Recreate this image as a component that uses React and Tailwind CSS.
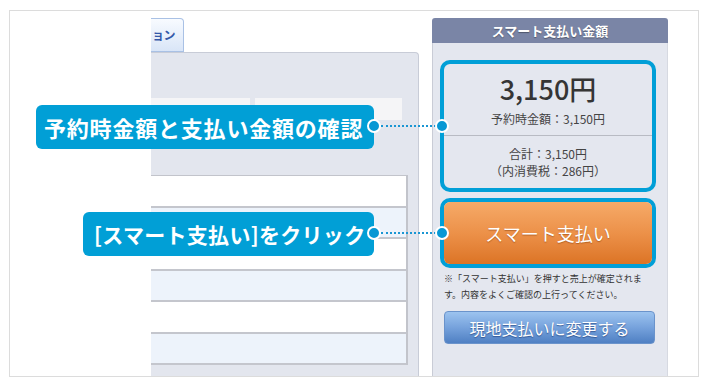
import React from "react";

const rows = [
  "bg-white",
  "bg-[#edf3fb]",
  "bg-white",
  "bg-[#edf3fb]",
  "bg-white",
  "bg-[#edf3fb]",
];

function Connector({ top }) {
  return (
    <>
      <div
        className="absolute left-[367px] w-[14px] h-[14px] rounded-full bg-[#0898d4] border-2 border-white z-20"
        style={{ top: top - 7 }}
      />
      <div
        className="absolute left-[381px] w-[55px] border-t-2 border-dotted border-[#1a96d3] z-10"
        style={{ top: top - 1 }}
      />
      <div
        className="absolute left-[435px] w-[14px] h-[14px] rounded-full bg-[#0898d4] border-2 border-white z-20"
        style={{ top: top - 7 }}
      />
    </>
  );
}

export default function App() {
  return (
    <div
      className="relative w-[710px] h-[387px] bg-white overflow-hidden"
      style={{ fontFamily: '"Noto Sans CJK JP", "Noto Sans", sans-serif' }}
    >
      <div className="pt-[10px] pl-[9px]">
        <div className="w-[690px] h-[367px] border border-[#dcdcdc] flex">
          {/* white area */}
          <div className="w-[141px] shrink-0" />

          {/* screenshot column */}
          <div className="w-[268px] shrink-0 flex flex-col">
            <div className="pt-[7px] h-[41px] flex">
              <div className="w-[33px] h-[34px] border border-l-0 border-[#a9c1e5] rounded-tr-[4px] bg-linear-to-b from-[#f8fbff] to-[#d9e5f7] flex items-center pl-[1px]">
                <span className="text-[12px] font-bold text-[#3458a9] leading-none tracking-[-0.5px]">
                  ョン
                </span>
              </div>
            </div>
            <div className="flex-1 bg-[#e3e6ee] border-t border-r border-[#c8ccd7] rounded-tr-[4px] pt-[45px]">
              <div className="flex gap-[5px] h-[22px]">
                <div className="w-[99px] bg-[#f5f5f7]" />
                <div className="w-[147px] bg-[#f5f5f7]" />
              </div>
              <div className="mt-[55px] w-[257px] border-t border-r-2 border-[#c2c4cb]">
                {rows.map((c, i) => (
                  <div
                    key={i}
                    className={`h-[31.5px] border-b-2 border-[#c4c6cd] ${c}`}
                  />
                ))}
              </div>
            </div>
          </div>

          {/* gap */}
          <div className="w-[13px] shrink-0" />

          {/* sidebar */}
          <div className="w-[236px] shrink-0 flex flex-col pt-[7px]">
            <div className="h-[25px] rounded-t-[3px] bg-[#7a85a6] flex items-center justify-center">
              <span className="text-[13px] font-bold text-white leading-none [text-shadow:0_1px_1px_rgba(0,0,0,0.35)]">
                スマート支払い金額
              </span>
            </div>
            <div className="flex-1 bg-[#e4e7ef] border-x border-l-[#c9ccd6] border-r-[#d6d9e1] pt-[17px] pl-[7px]">
              {/* amount box */}
              <div className="w-[216px] h-[132px] border-4 border-[#019fd7] rounded-[10px] flex flex-col text-[#444]">
                <div className="pt-[9px] text-center text-[27px] font-medium leading-[32px] text-[#353535]">
                  3,150円
                </div>
                <div className="mt-[6px] text-center text-[12px] leading-[16px]">
                  予約時金額：3,150円
                </div>
                <div className="mt-[8px] h-px bg-[#b8bbc3]" />
                <div className="mt-[10px] text-center text-[12px] leading-[16.5px]">
                  合計：3,150円
                  <br />
                  （内消費税：286円）
                </div>
              </div>

              {/* orange button box */}
              <div className="mt-[6px] w-[216px] h-[70px] border-4 border-[#019fd7] rounded-[10px] flex">
                <div className="flex-1 rounded-[6px] bg-linear-to-b from-[#f6aa68] via-[#ec9149] to-[#dc7424] flex items-center justify-center">
                  <span className="text-[18px] text-white leading-none [text-shadow:0_1px_1px_rgba(120,50,0,0.45)]">
                    スマート支払い
                  </span>
                </div>
              </div>

              {/* note */}
              <div className="mt-[3px] pl-[4px] pr-[8px] text-[9px] leading-[15.5px] text-[#333]">
                ※「スマート支払い」を押すと売上が確定されま
                <br />
                す。内容をよくご確認の上行ってください。
              </div>

              {/* blue button */}
              <div className="mt-[9px] ml-[4px] w-[211px] h-[33px] rounded-[4px] border border-[#6a93cb] bg-linear-to-b from-[#9cc3ef] via-[#76a2dc] to-[#4f80c3] flex items-center justify-center">
                <span className="text-[16px] text-white leading-none [text-shadow:0_1px_1px_rgba(20,50,110,0.6)]">
                  現地支払いに変更する
                </span>
              </div>
            </div>
          </div>
        </div>
      </div>

      {/* callouts */}
      <div className="absolute left-[36px] top-[105px] w-[338px] h-[44px] rounded-[6px] bg-[#019fd6] flex items-center pl-[8px] z-10">
        <span className="text-[22px] font-bold text-white leading-none tracking-[0.8px] whitespace-nowrap">
          予約時金額と支払い金額の確認
        </span>
      </div>
      <div className="absolute left-[83px] top-[212px] w-[291px] h-[44px] rounded-[6px] bg-[#019fd6] flex items-center pl-[11px] z-10">
        <span className="text-[21px] font-bold text-white leading-none tracking-[0.3px] whitespace-nowrap">
          [スマート支払い]をクリック
        </span>
      </div>
      <Connector top={126} />
      <Connector top={233} />
    </div>
  );
}
